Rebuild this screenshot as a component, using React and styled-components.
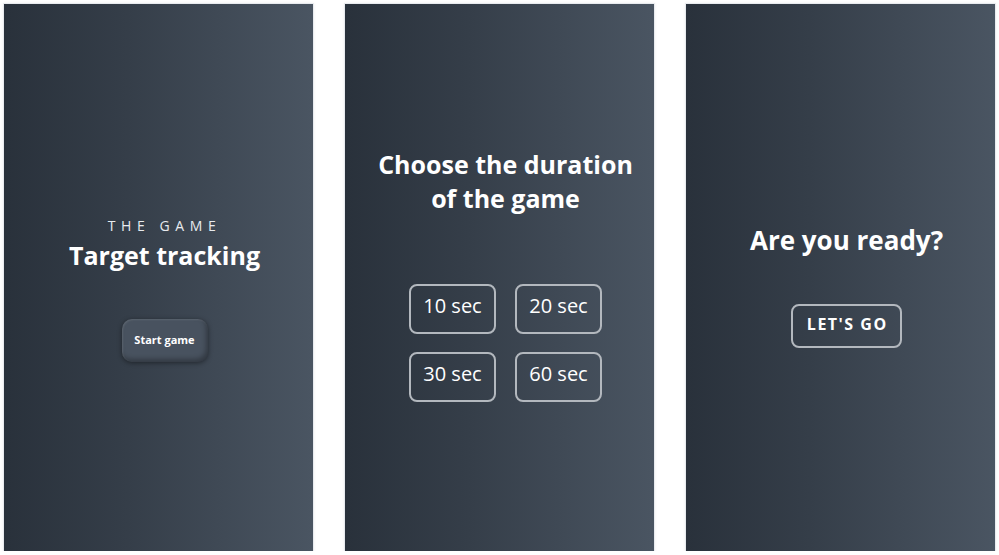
import React from "react";
import styled, { createGlobalStyle } from "styled-components";

const Global = createGlobalStyle`
  html, body { margin: 0; padding: 0; background: #ffffff; }
  body { font-family: "Open Sans", "Noto Sans", sans-serif; }
  * { box-sizing: border-box; }
`;

const Row = styled.div`
  display: flex;
  gap: 32px;
  padding: 4px 0 0 4px;
`;

const Panel = styled.section`
  width: 309px;
  height: 547px;
  background: linear-gradient(to right, #29313b 0%, #353e49 40%, #4a5562 100%);
  box-shadow: 0 0 0 1px #e8ebef, 0 0 3px 1px rgba(0, 0, 0, 0.06);
  display: flex;
  flex-direction: column;
  align-items: center;
  padding: ${(p) => p.$top}px 0 0 12px;
  color: #ffffff;
`;

const Kicker = styled.div`
  font-size: 14px;
  line-height: 20px;
  letter-spacing: 5.6px;
  color: #e8ebef;
`;

const Title = styled.h1`
  margin: ${(p) => p.$mt || 0}px 0 0;
  font-size: ${(p) => p.$size || 25}px;
  line-height: 34px;
  font-weight: 700;
  text-align: center;
  color: #ffffff;
`;

const SoftButton = styled.button`
  margin-top: ${(p) => p.$mt}px;
  width: 86px;
  height: 43px;
  border: none;
  border-radius: 10px;
  background: #48525f;
  color: #ffffff;
  font-family: inherit;
  font-size: 11px;
  font-weight: 700;
  padding: 0 0 3px;
  box-shadow: 0 1px 5px rgba(0, 0, 0, 0.45),
    inset 1px 1px 2px rgba(255, 255, 255, 0.12),
    inset -2px -3px 5px rgba(0, 0, 0, 0.3);
`;

const Grid = styled.div`
  margin-top: ${(p) => p.$mt}px;
  display: grid;
  grid-template-columns: 87px 87px;
  column-gap: 19px;
  row-gap: 18px;
`;

const OutlineButton = styled.button`
  width: ${(p) => p.$w || 87}px;
  height: ${(p) => p.$h || 50}px;
  margin-top: ${(p) => p.$mt || 0}px;
  border: 2px solid #b3b8be;
  border-radius: 8px;
  background: transparent;
  color: #ffffff;
  font-family: inherit;
  font-size: ${(p) => p.$fs || 20}px;
  font-weight: ${(p) => p.$fw || 400};
  letter-spacing: ${(p) => p.$ls || 0}px;
  padding: 0 0 ${(p) => p.$pb || 8}px ${(p) => p.$ls || 0}px;
`;

export default function App() {
  return (
    <>
      <Global />
      <Row>
        <Panel $top={212}>
          <Kicker>THE GAME</Kicker>
          <Title $mt={2}>Target tracking</Title>
          <SoftButton $mt={47}>Start game</SoftButton>
        </Panel>
        <Panel $top={143}>
          <Title>
            Choose the duration
            <br />
            of the game
          </Title>
          <Grid $mt={69}>
            <OutlineButton>10 sec</OutlineButton>
            <OutlineButton>20 sec</OutlineButton>
            <OutlineButton>30 sec</OutlineButton>
            <OutlineButton>60 sec</OutlineButton>
          </Grid>
        </Panel>
        <Panel $top={219}>
          <Title $size={26}>Are you ready?</Title>
          <OutlineButton $w={111} $h={44} $mt={47} $fs={16} $fw={700} $ls={1.5} $pb={5}>
            LET'S GO
          </OutlineButton>
        </Panel>
      </Row>
    </>
  );
}
